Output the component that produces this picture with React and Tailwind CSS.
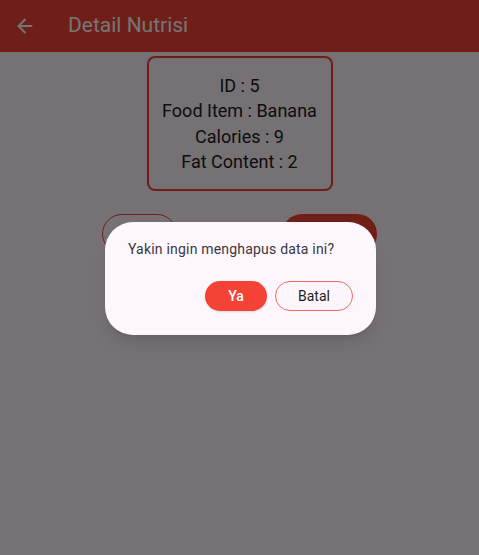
import { ArrowLeft } from 'lucide-react';

export default function App() {
  return (
    <div className="relative w-[479px] h-[555px] overflow-hidden bg-[#fef7ff] font-['Roboto',sans-serif]">
      {/* AppBar */}
      <div className="h-[52px] bg-[#f44336] flex items-center">
        <ArrowLeft size={22} strokeWidth={2.2} className="text-white ml-[14px]" />
        <h1 className="ml-[32px] text-[21px] text-white">Detail Nutrisi</h1>
      </div>

      {/* Content */}
      <div className="flex flex-col items-center">
        <div className="mt-[4px] w-[186px] h-[135px] border-2 border-[#f44336] rounded-[8px] flex flex-col items-center justify-center text-[18px] leading-[25.5px] text-[#1d1b20]">
          <p>ID : 5</p>
          <p>Food Item : Banana</p>
          <p>Calories : 9</p>
          <p>Fat Content : 2</p>
        </div>
        <div className="mt-[23px] flex gap-[105px]">
          <button className="w-[75px] h-[40px] rounded-full border border-[#f44336] text-[#f44336] text-sm font-medium">Ubah</button>
          <button className="w-[95px] h-[40px] rounded-full bg-[#f44336] text-white text-sm font-medium">Hapus</button>
        </div>
      </div>

      {/* Dialog scrim */}
      <div className="absolute inset-0 bg-black/[0.54]">
        <div className="absolute left-[105px] top-[222px] w-[271px] h-[113px] rounded-[28px] bg-[#fdf7fd] shadow-lg px-[23px] pt-[17px]">
          <p className="text-[14px] leading-[20px] text-[#3a383d] tracking-[0.2px]">Yakin ingin menghapus data ini?</p>
          <div className="mt-[22px] flex justify-end gap-[8px]">
            <button className="w-[62px] h-[30px] rounded-full bg-[#f44336] text-white text-[14px] font-medium shadow">Ya</button>
            <button className="w-[78px] h-[30px] rounded-full border border-[#f4695f] text-[#1d1b20] text-[14px]">Batal</button>
          </div>
        </div>
      </div>
    </div>
  );
}
